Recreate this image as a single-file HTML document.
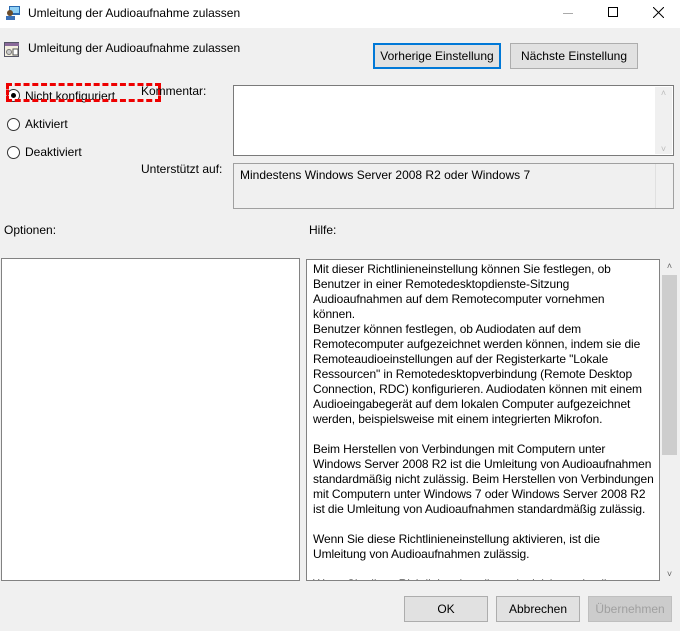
<!DOCTYPE html>
<html><head><meta charset="utf-8"><style>
*{margin:0;padding:0;box-sizing:border-box}
body{width:680px;height:631px;background:#f0f0f0;font-family:"Liberation Sans",sans-serif;font-size:12px;color:#000;position:relative;overflow:hidden}
.a{position:absolute}
.btn{position:absolute;background:#e1e1e1;border:1px solid #adadad;text-align:center;line-height:24px;font-size:12px}
.radio{position:absolute;width:13px;height:13px;border:1px solid #333;border-radius:50%;background:#fff}
.sb{position:absolute;background:#f0f0f0;width:17px}
.help div{white-space:nowrap}
</style></head><body>
<div class="a" style="left:0;top:0;width:680px;height:28px;background:#fff"></div>
<svg class="a" style="left:5px;top:5px" width="16" height="16"><rect x="4" y="1" width="11" height="9" fill="#2a6ab0"/><rect x="5" y="2" width="9" height="6" fill="#8fd0f5"/><circle cx="5" cy="8" r="3" fill="#6b4c2a"/><rect x="1" y="11" width="9" height="4" fill="#3a6fb5"/></svg>
<div class="a" style="left:28px;top:6px;font-size:12px">Umleitung der Audioaufnahme zulassen</div>
<div class="a" style="left:563px;top:13px;width:10px;height:1px;background:#aaa"></div>
<div class="a" style="left:608px;top:7px;width:10px;height:10px;border:1px solid #000"></div>
<svg class="a" style="left:653px;top:7px" width="11" height="11"><path d="M0 0L11 11M11 0L0 11" stroke="#000" stroke-width="1"/></svg>
<svg class="a" style="left:4px;top:42px" width="16" height="16"><rect x="0.5" y="0.5" width="14" height="14" fill="#f4f0e0" stroke="#556"/><rect x="1" y="1" width="14" height="3" fill="#8a6a9a"/><circle cx="5" cy="10" r="2.5" fill="#ccc" stroke="#777"/><rect x="9" y="7" width="5" height="6" fill="#fff" stroke="#555"/></svg>
<div class="a" style="left:28px;top:41px">Umleitung der Audioaufnahme zulassen</div>
<div class="btn" style="left:373px;top:43px;width:128px;height:26px;border:2px solid #0078d7;line-height:22px">Vorherige Einstellung</div>
<div class="btn" style="left:510px;top:43px;width:128px;height:26px">Nächste Einstellung</div>
<div class="radio" style="left:7px;top:89px"><div class="a" style="left:3px;top:3px;width:5px;height:5px;border-radius:50%;background:#000"></div></div>
<div class="a" style="left:25px;top:89px">Nicht konfiguriert</div>
<div class="a" style="left:6px;top:83px;width:155px;height:19px;border:3px dashed #e00"></div>
<div class="radio" style="left:7px;top:118px"></div><div class="a" style="left:25px;top:117px">Aktiviert</div>
<div class="radio" style="left:7px;top:146px"></div><div class="a" style="left:25px;top:145px">Deaktiviert</div>
<div class="a" style="left:141px;top:84px">Kommentar:</div>
<div class="a" style="left:233px;top:85px;width:441px;height:71px;background:#fff;border:1px solid #7a7a7a"></div>
<div class="sb" style="left:655px;top:87px;height:67px"><div style="color:#bbb;font-size:9px;text-align:center;line-height:12px">˄</div><div style="color:#bbb;font-size:9px;text-align:center;position:absolute;bottom:0;width:17px">˅</div></div>
<div class="a" style="left:141px;top:162px">Unterstützt auf:</div>
<div class="a" style="left:233px;top:163px;width:441px;height:46px;border:1px solid #a0a0a0;background:#f0f0f0;padding:4px 6px">Mindestens Windows Server 2008 R2 oder Windows 7</div>
<div class="sb" style="left:655px;top:164px;height:44px;border-left:1px solid #e0e0e0"></div>
<div class="a" style="left:4px;top:223px">Optionen:</div>
<div class="a" style="left:309px;top:223px">Hilfe:</div>
<div class="a" style="left:1px;top:258px;width:299px;height:323px;background:#fff;border:1px solid #828282"></div>
<div class="a help" style="left:306px;top:259px;width:354px;height:322px;background:#fff;border:1px solid #828282;padding:2px 6px;line-height:15px;overflow:hidden;letter-spacing:-0.1px">
<div>Mit dieser Richtlinieneinstellung können Sie festlegen, ob</div>
<div>Benutzer in einer Remotedesktopdienste-Sitzung</div>
<div>Audioaufnahmen auf dem Remotecomputer vornehmen</div>
<div>können.</div>
<div>Benutzer können festlegen, ob Audiodaten auf dem</div>
<div>Remotecomputer aufgezeichnet werden können, indem sie die</div>
<div>Remoteaudioeinstellungen auf der Registerkarte "Lokale</div>
<div>Ressourcen" in Remotedesktopverbindung (Remote Desktop</div>
<div>Connection, RDC) konfigurieren. Audiodaten können mit einem</div>
<div>Audioeingabegerät auf dem lokalen Computer aufgezeichnet</div>
<div>werden, beispielsweise mit einem integrierten Mikrofon.</div>
<div>&nbsp;</div>
<div>Beim Herstellen von Verbindungen mit Computern unter</div>
<div>Windows Server 2008 R2 ist die Umleitung von Audioaufnahmen</div>
<div>standardmäßig nicht zulässig. Beim Herstellen von Verbindungen</div>
<div>mit Computern unter Windows 7 oder Windows Server 2008 R2</div>
<div>ist die Umleitung von Audioaufnahmen standardmäßig zulässig.</div>
<div>&nbsp;</div>
<div>Wenn Sie diese Richtlinieneinstellung aktivieren, ist die</div>
<div>Umleitung von Audioaufnahmen zulässig.</div>
<div>&nbsp;</div>
<div>Wenn Sie diese Richtlinieneinstellung deaktivieren, ist die</div>
</div>
<div class="sb" style="left:661px;top:259px;height:322px"><div style="color:#666;font-size:9px;text-align:center;line-height:14px">˄</div><div class="a" style="left:1px;top:16px;width:15px;height:180px;background:#cdcdcd"></div><div style="color:#666;font-size:9px;text-align:center;position:absolute;bottom:2px;width:17px">˅</div></div>
<div class="btn" style="left:404px;top:596px;width:84px;height:26px">OK</div>
<div class="btn" style="left:496px;top:596px;width:84px;height:26px">Abbrechen</div>
<div class="btn" style="left:588px;top:596px;width:84px;height:26px;background:#ccc;border-color:#bfbfbf;color:#a0a0a0">Übernehmen</div>
</body></html>
